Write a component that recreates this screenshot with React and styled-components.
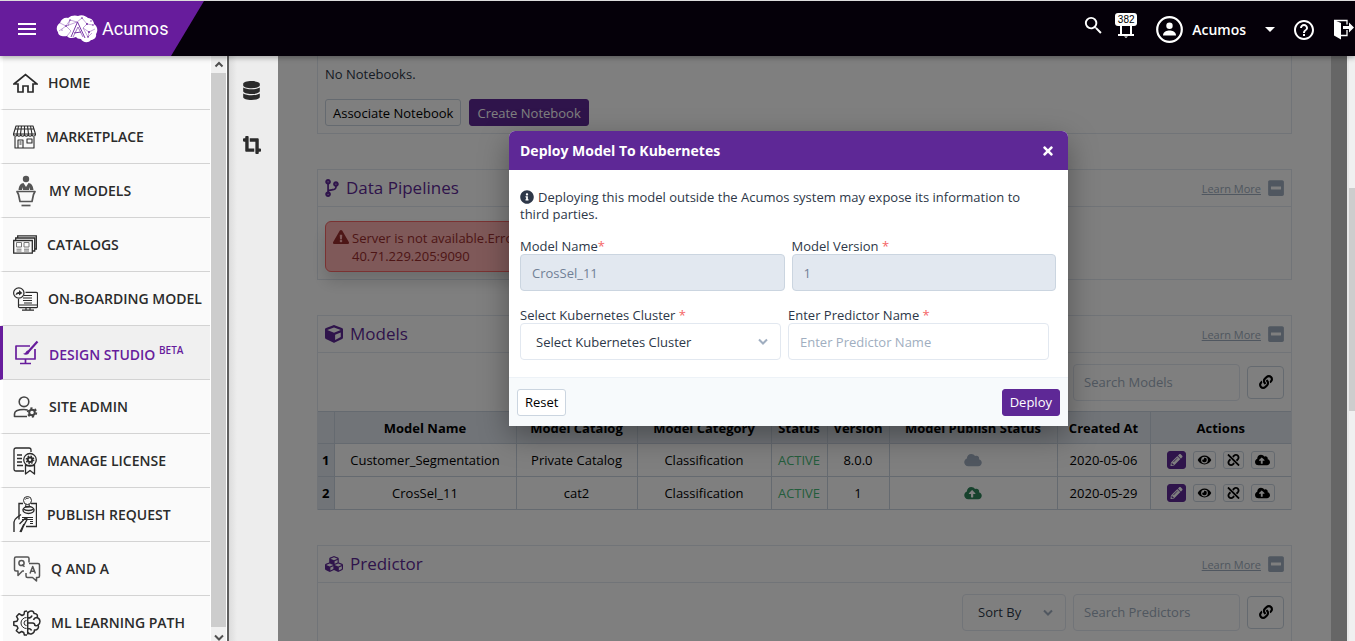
import React from "react";
import styled, { createGlobalStyle, css } from "styled-components";
import {
  FaCodeBranch, FaCloud, FaCloudUploadAlt, FaCropAlt, FaCube, FaCubes, FaDatabase,
  FaExclamationTriangle, FaEye, FaInfoCircle, FaLink, FaMinusSquare, FaPencilAlt, FaTimes, FaUnlink,
} from "react-icons/fa";
import { MdHelpOutline, MdMenu, MdSearch } from "react-icons/md";

const Global = createGlobalStyle`
  *, *::before, *::after { box-sizing: border-box; }
  body { margin: 0; background: #fff; font-family: "Open Sans", "Noto Sans", sans-serif; font-size: 13px; color: #2d3748; }
  button, input, select { font: inherit; color: inherit; margin: 0; }
  button { cursor: pointer; }
  svg { display: block; flex: none; }
`;

const Page = styled.div`
  display: flex;
  flex-direction: column;
  height: 100vh;
  overflow: hidden;
`;

/* ---------- top bar ---------- */
const TopBar = styled.header`
  position: relative;
  z-index: 5;
  flex: none;
  display: flex;
  justify-content: space-between;
  height: 56px;
  overflow: clip;
  overflow-clip-margin: 8px;
  background: #050009;
  border-top: 1px solid #dcdcdc;
  color: #fff;
  box-shadow: 0 2px 5px rgba(0, 0, 0, 0.3);
`;
const Brand = styled.div`
  display: flex;
  align-items: center;
  width: 204px;
  padding-left: 15px;
  background: #671c9c;
  clip-path: polygon(0 0, 100% 0, 171px 100%, 0 100%);
`;
const PlainButton = styled.button`
  display: flex;
  align-items: center;
  padding: 0;
  border: 0;
  background: none;
`;
const Logo = styled.a`
  display: flex;
  align-items: center;
  gap: 4px;
  margin-left: 17px;
  color: #fff;
  text-decoration: none;
  font-family: "Roboto", sans-serif;
  font-size: 18px;
  font-weight: 400;
  line-height: 28px;
`;
const TopActions = styled.div`
  display: flex;
  align-items: center;
  flex: none;
  padding-top: 2px;
`;
const AlertActions = styled.div`
  display: flex;
  align-items: center;
  gap: 10px;
  padding-bottom: 8px;
  margin-right: 19px;
`;
const BellButton = styled(PlainButton)`
  flex-direction: column;
`;
const Badge = styled.span`
  width: 22px;
  border-radius: 3px;
  background: #fff;
  color: #000;
  font: 10px/13px "Liberation Sans", sans-serif;
  text-align: center;
`;
const UserButton = styled(PlainButton)`
  gap: 9px;
  margin-right: 17px;
  font-size: 14px;
  font-weight: 600;
`;
const Caret = styled.span`
  margin-left: 10px;
  border: 5px solid transparent;
  border-top-color: #fff;
  border-bottom: 0;
`;
const LogoutButton = styled(PlainButton)`
  width: 22px;
  margin-left: 17px;
`;

/* ---------- side menu ---------- */
const Body = styled.div`
  display: flex;
  flex: 1;
  min-height: 0;
`;
const Side = styled.div`
  display: flex;
  flex: none;
  width: 229px;
  border-right: 2px solid #5f5f5f;
  overflow: hidden;
`;
const Menu = styled.nav`
  width: 211px;
  overflow: hidden;
  border-right: 1px solid #fff;
  background: #fafafa;
`;
const MenuItem = styled.a`
  display: flex;
  align-items: center;
  gap: 10px;
  height: 54px;
  padding-left: 10px;
  border-left: 3px solid ${(p) => (p.$active ? "#671c9c" : "#fff")};
  border-bottom: 1px solid #d3d3d3;
  background: ${(p) => (p.$active ? "#f0f0f0" : "#fafafa")};
  color: ${(p) => (p.$active ? "#671c9c" : "#2b2b2b")};
  font-size: 14px;
  font-weight: 600;
  white-space: nowrap;
  text-decoration: none;
  sup { font-size: 10px; line-height: 18px; }
`;
const Scroll = styled.div`
  display: flex;
  flex-direction: column;
  flex: none;
  width: ${(p) => p.$width || 15}px;
  background: #f0f0f0;
`;
const ScrollArrow = styled.div`
  display: flex;
  justify-content: center;
  align-items: ${(p) => (p.$end ? "flex-end" : "center")};
  height: ${(p) => (p.$end ? 14 : 17)}px;
`;
const ScrollThumb = styled.div`
  flex: 1;
  background: #cdcdcd;
`;

/* ---------- workspace ---------- */
const Workspace = styled.main`
  position: relative;
  display: flex;
  flex: 1;
  min-width: 0;
`;
const Rail = styled.div`
  z-index: 3;
  display: flex;
  flex-direction: column;
  align-items: center;
  gap: 36px;
  flex: none;
  width: 49px;
  padding: 25px 4px 0 0;
  background: linear-gradient(90deg, #dcdcdc, #ededed 8px);
  color: #2b2b2b;
`;
const Content = styled.div`
  display: flex;
  flex-direction: column;
  gap: 35px;
  flex: 1;
  min-width: 0;
  padding: 0 39px;
  overflow: hidden;
  background: #fff;
`;
const Panel = styled.section`
  flex: none;
  border: 1px solid #e2e8f0;
  border-top-width: ${(p) => (p.$open ? 0 : 1)}px;
`;
const PanelHead = styled.div`
  display: flex;
  align-items: center;
  gap: 7px;
  height: 37px;
  padding: 0 7px;
  border-bottom: 1px solid #e2e8f0;
  color: #5e2896;
  > svg { width: ${(p) => p.$iconWidth}px; height: 18px; }
  h2 { flex: 1; margin: 0; font-size: 17px; font-weight: 400; line-height: 24px; }
`;
const LearnMore = styled.a`
  color: #a0aec0;
  font-size: 11px;
`;
const ToggleButton = styled(PlainButton)`
  color: #a0aec0;
  svg { width: 16px; height: 18px; }
`;
const Notebooks = styled.div`
  padding: 8px 7px 7px;
  p { margin: 0 0 15px; line-height: 20px; }
`;
const ButtonRow = styled.div`
  display: flex;
  gap: 8px;
`;
const Button = styled.button`
  height: 27px;
  padding: 0 7px;
  border: 1px solid #cbd5e0;
  border-radius: 3px;
  background: #fff;
  color: #000;
  line-height: 20px;
  ${(p) => p.$primary && css`
    border-color: #5e2896;
    background: #5e2896;
    color: #fff;
  `}
`;
const AlertArea = styled.div`
  display: flex;
  padding: 14px 7px 7px;
`;
const Alert = styled.div`
  display: flex;
  gap: 3px;
  width: 380px;
  padding: 7px 7px 6px;
  border: 1px solid #f56565;
  border-radius: 6px;
  background: #feb2b2;
  color: #9b2c2c;
  line-height: 18px;
  box-shadow: 0 10px 15px rgba(0, 0, 0, 0.15);
`;
const Toolbar = styled.div`
  display: flex;
  justify-content: flex-end;
  align-items: center;
  gap: 7px;
  height: 58px;
  padding: 0 7px;
`;
const SearchInput = styled.input`
  width: 167px;
  height: 37px;
  padding: 0 10px;
  border: 1px solid #e2e8f0;
  border-radius: 4px;
  background: #fff;
  &::placeholder { color: #a0aec0; opacity: 1; }
`;
const LinkButton = styled.button`
  display: grid;
  place-items: center;
  width: 37px;
  height: 33px;
  padding: 0;
  border: 1px solid #cbd5e0;
  border-radius: 4px;
  background: #fff;
  color: #000;
  font-size: 14px;
`;
const SelectBox = styled.div`
  position: relative;
  width: ${(p) => (p.$width ? p.$width + "px" : "100%")};
  select {
    width: 100%;
    height: 37px;
    padding: 0 30px 0 15px;
    border: 1px solid #e2e8f0;
    border-radius: 4px;
    background: #fff;
    appearance: none;
  }
  svg { position: absolute; right: 13px; top: 15px; pointer-events: none; }
`;
const Table = styled.table`
  width: 100%;
  margin-bottom: -1px;
  table-layout: fixed;
  border-collapse: collapse;
  color: #000;
  text-align: center;
  th, td {
    height: 32px;
    padding: 0;
    border: 1px solid #cbd5e0;
    white-space: nowrap;
  }
  td { height: 33px; }
  th { background: #e2e8f0; font-weight: 700; }
  tr > :first-child { border-left: 0; }
  tr > :last-child { border-right: 0; }
`;
const Status = styled.span`
  color: #48bb78;
`;
const CenterIcon = styled.span`
  display: flex;
  justify-content: center;
  color: ${(p) => p.$color};
  svg { width: 18px; height: 14px; }
`;
const Actions = styled.div`
  display: flex;
  justify-content: center;
  gap: 7px;
`;
const ActionButton = styled.button`
  display: flex;
  justify-content: center;
  align-items: center;
  width: ${(p) => p.$width}px;
  height: 18px;
  padding: 0;
  border: 1px solid ${(p) => (p.$primary ? "#5e2896" : "#cbd5e0")};
  border-radius: 3px;
  background: ${(p) => (p.$primary ? "#5e2896" : "#fff")};
  color: ${(p) => (p.$primary ? "#fff" : "#000")};
  svg { width: 15px; height: 12px; }
`;
const WindowScroll = styled.div`
  flex: none;
  width: 8px;
  border-left: 2px solid #e8e8e8;
  background: #f0f0f0;
  padding-top: 132px;
`;
const WindowThumb = styled.div`
  height: 223px;
  background: #cdcdcd;
`;

/* ---------- dialog ---------- */
const Overlay = styled.div`
  position: absolute;
  inset: 0;
  z-index: 2;
  display: flex;
  justify-content: center;
  align-items: flex-start;
  padding: 75px 0 0 1px;
  background: rgba(0, 0, 0, 0.5);
`;
const Dialog = styled.div`
  width: 559px;
  max-width: 100%;
  border-radius: 6px 6px 0 0;
  background: #fff;
  box-shadow: 0 10px 30px rgba(0, 0, 0, 0.35);
`;
const DialogHead = styled.div`
  display: flex;
  justify-content: space-between;
  align-items: center;
  height: 39px;
  padding: 0 13px 0 11px;
  border-radius: 6px 6px 0 0;
  background: #5e2896;
  color: #fff;
  h1 { margin: 0; font-size: 14px; font-weight: 700; }
  button { font-size: 14px; }
`;
const DialogBody = styled.div`
  padding: 19px 12px 17px 11px;
`;
const Notice = styled.p`
  margin: 0 0 15px;
  padding-right: 18px;
  line-height: 17px;
  svg { display: inline-block; margin-right: 4px; font-size: 14px; vertical-align: -2px; }
`;
const FieldRow = styled.div`
  display: flex;
  gap: 7px;
  padding-right: ${(p) => (p.$inset ? 7 : 0)}px;
  & + & { margin-top: 16px; }
`;
const Field = styled.div`
  flex: 1;
  label { display: block; line-height: 16px; }
  em { color: #f56565; font-style: normal; }
`;
const TextInput = styled.input`
  display: block;
  width: 100%;
  height: 37px;
  padding: 0 11px;
  border: 1px solid #e2e8f0;
  border-radius: 4px;
  background: #fff;
  &::placeholder { color: #a0aec0; opacity: 1; }
  &:disabled { border-color: #cbd5e0; background: #e2e8f0; color: #718096; }
`;
const DialogFoot = styled.div`
  display: flex;
  justify-content: space-between;
  align-items: center;
  height: 49px;
  padding: 0 8px;
  border-top: 1px solid #edf2f7;
  background: #f7fafc;
`;

/* ---------- drawings ---------- */
const Line = ({ w, h, sw = 1.4, children }) => (
  <svg width={w} height={h} viewBox={`0 0 ${w} ${h}`} fill="none" stroke="currentColor" strokeWidth={sw} strokeLinejoin="round" aria-hidden="true">
    {children}
  </svg>
);
const BrainLogo = () => (
  <svg width="42" height="28" viewBox="0 0 42 28" aria-hidden="true">
    <path fill="#fff" d="M2 17C-1 13 2 9 4 8 5 4 9 2 12 3c3-3 8-3 10-2 4-2 8 0 10 2 4 0 6 4 6 6 4 3 4 7 2 10 1 4-3 6-5 6-3 4-9 2-10-1-3 0-4-1-5-2-4 2-8 1-9-1-4 1-9 0-9-4z" />
    <g stroke="#671c9c" strokeWidth=".4" fill="none">
      <path d="M4 8l6 3 4-6 7 2 5-4 5 6 6 1M3 16l7-5 5 5-4 5M10 11l11-4M31 9l-4 4 6 4 6-3M27 13l5 9 1-5M32 22l4-4M14 5l-2 6" />
      <path strokeWidth=".9" d="M15 22l6.500-15 7.500 16M18 18l7-1" />
      <path strokeWidth=".6" d="M17 22l5-10 5 10" />
    </g>
    <g fill="#671c9c">
      <circle cx="10" cy="11" r=".8" /><circle cx="14" cy="5" r=".7" /><circle cx="26" cy="3" r=".8" /><circle cx="31" cy="9" r=".9" />
      <circle cx="37" cy="10" r=".8" /><circle cx="33" cy="17" r=".9" /><circle cx="32" cy="22" r=".8" /><circle cx="6" cy="15" r=".6" /><circle cx="35" cy="6" r=".7" />
    </g>
  </svg>
);
const UserIcon = () => (
  <svg width="27" height="27" viewBox="0 0 27 27" aria-hidden="true">
    <circle cx="13.500" cy="13.500" r="12.300" fill="none" stroke="#fff" strokeWidth="2.200" />
    <circle cx="13.500" cy="9.800" r="3.200" fill="#fff" />
    <path fill="#fff" d="M7 19.500c0-4 4-5 6.500-5s6.500 1 6.500 5z" />
  </svg>
);
const BellBase = () => (
  <svg width="18" height="12" viewBox="0 0 18 12" aria-hidden="true">
    <path d="M4 0v9M14 0v9M1 9h16" stroke="#fff" strokeWidth="2" fill="none" />
    <path d="M7 10.500h4l-2 1.500z" fill="#fff" />
  </svg>
);
const LogoutIcon = () => (
  <svg width="23" height="21" viewBox="0 0 23 21" aria-hidden="true">
    <path fill="#fff" d="M1 1l7 3v16.500l-7-4z" />
    <path fill="none" stroke="#fff" strokeWidth="1.300" d="M1 1.500h13v4M14 11v5.500H8" />
    <path fill="#fff" d="M10 7h6V3.500l5 5-5 5V10h-6z" />
  </svg>
);
const HomeIcon = () => (
  <Line w={25} h={20} sw={1.7}><path strokeLinejoin="miter" d="M1 11L12.500 1.500 24 11h-4v8h-5v-6h-5v6H5v-8z" /></Line>
);
const MarketIcon = () => (
  <Line w={23} h={24} sw={1.1}>
    <path d="M3 1h17l2.500 8H.5zM2 12v11h19V12M5 23v-8h5v8M14 14h5v4h-5zM5.500 1L4 9M8.500 1L7.500 9M11.500 1v8M14.500 1l1 8M17.500 1L19 9M2 4h19" />
    <path d="M.5 9c0 3 3.600 3 3.600 0 0 3 3.700 3 3.700 0 0 3 3.700 3 3.700 0 0 3 3.700 3 3.700 0 0 3 3.700 3 3.700 0 0 3 3.600 3 3.600 0" />
    <path d="M6.500 17h2M6.500 19h2" />
  </Line>
);
const ModelsIcon = () => (
  <Line w={26} h={32} sw={1.7}>
    <g color="#555" stroke="currentColor">
      <circle cx="13" cy="4" r="3.200" fill="currentColor" stroke="none" />
      <path fill="currentColor" stroke="none" d="M5.500 15c.5-5 2.500-6.500 5-7L13 12l2.500-4c2.500.5 4.500 2 5 7h-3.500l-1-3v3h-6v-3l-1 3z" />
      <path d="M4 16.500h18l-1.500 3-1.500 7H7l-1.500-7z" />
      <path d="M8.500 30.500h9" />
    </g>
  </Line>
);
const CatalogIcon = () => (
  <Line w={24} h={19} sw={1.3}>
    <path strokeLinejoin="miter" d="M.7 5.500h18.600v12.700H.7zM2.700 5.500V3h19v13h-2.400M4.700 3V.8h18.600V14h-1.600" />
    <path strokeWidth="1" stroke="#777" d="M3.500 7.500h5v4.500h-5zM11 7.500h5v4.500h-5zM3.500 14.200h5M3.500 16h5M11 14.200h5M11 16h5" />
  </Line>
);
const OnboardIcon = () => (
  <Line w={25} h={24} sw={1.2}>
    <circle cx="5.800" cy="6" r="5.200" />
    <path fill="currentColor" stroke="none" d="M2.500 8.500c.3-2.500 1.500-3.500 3.500-3.500V3l3.300 3L6 8.500V7C4.500 7 3.500 7.500 2.500 8.500z" />
    <path d="M5.500 12v7.500c0 .8.500 1.200 1.200 1.200h16.600c.7 0 1.200-.5 1.200-1.200v-13c0-.7-.5-1.200-1.200-1.200H12.500M5.500 18h19M13 21v2M17 21v2M9 23.200h12" />
    <path d="M11 8.500h8M10 11h9M10 13.500h9M11 16h8" />
  </Line>
);
const DesignIcon = () => (
  <Line w={26} h={25} sw={1.7}>
    <path d="M17 6H3v13h19V9M12.500 19v4M7 23.500h11" />
    <path strokeWidth="2.200" d="M24.500 1.500L15.500 11.500" />
    <path fill="currentColor" stroke="none" d="M16.500 11.500c-.5-1.500-2.500-1.500-3.300 0-.7 1.500-1.500 2-3.200 2.200 2.500 2 6.200 1 6.500-2.200z" />
  </Line>
);
const AdminIcon = () => (
  <Line w={26} h={22} sw={1.6}>
    <g stroke="#444">
      <circle cx="11" cy="5.800" r="4.800" />
      <path d="M14 20.500H1.500v-2.500c0-3 4-4.500 9.500-4.500 1.500 0 2.500.2 3.500.5" />
      <circle cx="19" cy="16.500" r="2.800" strokeWidth="2" />
      <circle cx="19" cy="16.500" r="4.300" strokeWidth="1.800" strokeDasharray="2.200 2.300" />
    </g>
  </Line>
);
const LicenseIcon = () => (
  <Line w={24} h={28} sw={1.3}>
    <path d="M11 24H3c-1.300 0-2-.8-2-2V3c0-1.300.8-2 2-2h13c1.300 0 2 .7 2 2v2M4 8h5M4 11.500h5M4 15h5M4 18.500h6" />
    <circle cx="17" cy="12.800" r="6.300" />
    <circle cx="17" cy="12.800" r="2.300" strokeWidth="2" /><circle cx="17" cy="12.800" r="3.800" strokeWidth="1.200" strokeDasharray="1.500 1.500" />
    <path d="M12.500 17.500V27l4.500-3.500 4.500 3.500v-9.500M12 18.500h10" />
  </Line>
);
const PublishIcon = () => (
  <Line w={24} h={37} sw={1.4}>
    <path strokeLinejoin="miter" d="M10 7.500H6v16M18 7.500h5.500v23H13" />
    <circle cx="14.500" cy="4.500" r="4" strokeWidth="1" />
    <path strokeWidth="1" d="M13 8l-.5 3h4l-.5-3M12.500 3.500a2 2 0 0 1 3-1M9 21.500h11M9 23.500h11M17 25.500h3M17 27.500h3" />
    <ellipse cx="15.500" cy="14" rx="5.500" ry="3.500" /><path d="M11 13c1 2 8 2 9 0" />
    <path d="M1 36V26c0-2 1-3 3-4.500l4-3M7 36l4-8" />
    <path d="M6.500 28L12 22.500c1-1 2.800 0 1.800 1.500L10 31l-2 5" />
  </Line>
);
const QaIcon = () => (
  <Line w={28} h={26} sw={1.5}>
    <g stroke="#555">
      <path d="M16 6.500V2.500c0-1-.6-1.500-1.500-1.500H3c-1 0-1.500.6-1.500 1.500v11c0 1 .6 1.500 1.500 1.500h2v4.500L9.500 15H11" />
      <path d="M16 7.500h9c1 0 1.500.5 1.500 1.500V20c0 1-.5 1.500-1.500 1.500h-1.500v3.500l-4-3.500h-5c-1 0-1.500-.5-1.500-1.500v-3" />
      <circle cx="8.500" cy="7" r="2.600" /><path d="M9 8.500l2.500 2.200M17 17.500l2.700-7 2.700 7M18 15.200h3.600" />
    </g>
  </Line>
);
const LearningIcon = () => (
  <Line w={28} h={26} sw={1.5}>
    <path d="M14 1l-2.500.5-.5 3-2 1-3-1.800L3.500 6.500l1.500 2.700-1 2-3.200.5v3.600l3.200.7 1 2.200-1.700 2.500L6 23l2.700-1.500 2 1 .7 2.500H14" />
    <path d="M13.500 7.500a5.500 5.500 0 0 0 0 11M13.500 10.500a2.500 2.500 0 0 0 0 5" strokeWidth="1" />
    <path d="M14.700 1.500v23M15 3c1-3 6-2.500 6 .5 3-.3 4 2 3 4 4 1.500 3.500 6 1 7.500 1.500 3-1 5.500-3.500 5 0 4-5 5-6.500 2.500M15 8c2 0 3.500-.5 4-2.500M24 7.500c-2 0-3 1-3.500 2.500M15 13h4.500c2 0 2.500 2 2.500 3M25 15c-1.500 1-3 .5-3.500 0M15 18.500c2 0 3 .5 3.500 2" />
  </Line>
);
const Chevron = ({ up, color = "#505050" }) => (
  <svg width="10" height="7" viewBox="0 0 10 7" fill="none" stroke={color} strokeWidth="2" aria-hidden="true">
    <path d={up ? "M1.500 5.500L5 2l3.500 3.500" : "M1 1.500l4 4 4-4"} />
  </svg>
);

const menu = [
  ["HOME", HomeIcon], ["MARKETPLACE", MarketIcon], ["MY MODELS", ModelsIcon], ["CATALOGS", CatalogIcon],
  ["ON-BOARDING MODEL", OnboardIcon], ["DESIGN STUDIO", DesignIcon], ["SITE ADMIN", AdminIcon],
  ["MANAGE LICENSE", LicenseIcon], ["PUBLISH REQUEST", PublishIcon], ["Q AND A", QaIcon], ["ML LEARNING PATH", LearningIcon],
];
const columns = [
  ["", 16], ["Model Name", 182], ["Model Catalog", 121], ["Model Category", 134], ["Status", 56],
  ["Version", 62], ["Model Publish Status", 168], ["Created At", 93], ["Actions", 141],
];
const models = [
  { name: "Customer_Segmentation", catalog: "Private Catalog", version: "8.0.0", published: false, created: "2020-05-06" },
  { name: "CrosSel_11", catalog: "cat2", version: "1", published: true, created: "2020-05-29" },
];

const PanelTitle = ({ icon, iconWidth = 18, title }) => (
  <PanelHead $iconWidth={iconWidth}>
    {icon}
    <h2>{title}</h2>
    <LearnMore href="#learn">Learn More</LearnMore>
    <ToggleButton aria-label={`Collapse ${title}`}><FaMinusSquare /></ToggleButton>
  </PanelHead>
);

export default function App() {
  return (
    <Page>
      <Global />
      <TopBar>
        <Brand>
          <PlainButton aria-label="Menu"><MdMenu size={24} color="#fff" /></PlainButton>
          <Logo href="#home"><BrainLogo />Acumos</Logo>
        </Brand>
        <TopActions>
          <AlertActions>
            <PlainButton aria-label="Search"><MdSearch size={23} color="#fff" /></PlainButton>
            <BellButton aria-label="Notifications"><Badge>382</Badge><BellBase /></BellButton>
          </AlertActions>
          <UserButton><UserIcon />Acumos<Caret /></UserButton>
          <PlainButton aria-label="Help"><MdHelpOutline size={24} color="#fff" /></PlainButton>
          <LogoutButton aria-label="Log out"><LogoutIcon /></LogoutButton>
        </TopActions>
      </TopBar>

      <Body>
        <Side>
          <Menu>
            {menu.map(([label, Icon]) => (
              <MenuItem key={label} href="#" $active={label === "DESIGN STUDIO"}>
                <Icon />
                <span>{label}{label === "DESIGN STUDIO" && <> <sup>BETA</sup></>}</span>
              </MenuItem>
            ))}
          </Menu>
          <Scroll>
            <ScrollArrow><Chevron up /></ScrollArrow>
            <ScrollThumb />
            <ScrollArrow $end><Chevron /></ScrollArrow>
          </Scroll>
        </Side>

        <Workspace>
          <Rail>
            <FaDatabase size={19} />
            <FaCropAlt size={18} />
          </Rail>
          <Content>
            <Panel $open>
              <Notebooks>
                <p>No Notebooks.</p>
                <ButtonRow>
                  <Button>Associate Notebook</Button>
                  <Button $primary>Create Notebook</Button>
                </ButtonRow>
              </Notebooks>
            </Panel>

            <Panel>
              <PanelTitle icon={<FaCodeBranch />} iconWidth={14} title="Data Pipelines" />
              <AlertArea>
                <Alert role="alert">
                  <FaExclamationTriangle size={16} />
                  <span>Server is not available.Error<br />40.71.229.205:9090</span>
                </Alert>
              </AlertArea>
            </Panel>

            <Panel>
              <PanelTitle icon={<FaCube />} title="Models" />
              <Toolbar>
                <SearchInput placeholder="Search Models" aria-label="Search Models" />
                <LinkButton aria-label="Associate model"><FaLink /></LinkButton>
              </Toolbar>
              <Table>
                <colgroup>{columns.map(([label, width]) => <col key={label} width={width} />)}</colgroup>
                <thead>
                  <tr>{columns.map(([label]) => <th key={label} scope="col">{label}</th>)}</tr>
                </thead>
                <tbody>
                  {models.map((m, i) => (
                    <tr key={m.name}>
                      <th scope="row">{i + 1}</th>
                      <td>{m.name}</td>
                      <td>{m.catalog}</td>
                      <td>Classification</td>
                      <td><Status>ACTIVE</Status></td>
                      <td>{m.version}</td>
                      <td>
                        <CenterIcon $color={m.published ? "#2f855a" : "#a0aec0"}>
                          {m.published ? <FaCloudUploadAlt /> : <FaCloud />}
                        </CenterIcon>
                      </td>
                      <td>{m.created}</td>
                      <td>
                        <Actions>
                          <ActionButton $primary $width={19} aria-label="Edit"><FaPencilAlt /></ActionButton>
                          <ActionButton $width={23} aria-label="View"><FaEye /></ActionButton>
                          <ActionButton $width={21} aria-label="Unlink"><FaUnlink /></ActionButton>
                          <ActionButton $width={24} aria-label="Deploy"><FaCloudUploadAlt /></ActionButton>
                        </Actions>
                      </td>
                    </tr>
                  ))}
                </tbody>
              </Table>
            </Panel>

            <Panel>
              <PanelTitle icon={<FaCubes />} title="Predictor" />
              <Toolbar>
                <SelectBox $width={104}>
                  <select aria-label="Sort predictors"><option>Sort By</option></select>
                  <Chevron color="#a0aec0" />
                </SelectBox>
                <SearchInput placeholder="Search Predictors" aria-label="Search Predictors" />
                <LinkButton aria-label="Associate predictor"><FaLink /></LinkButton>
              </Toolbar>
            </Panel>
          </Content>
          <Scroll $width={16}><ScrollThumb /></Scroll>

          <Overlay>
            <Dialog role="dialog" aria-modal="true" aria-labelledby="deploy-title">
              <DialogHead>
                <h1 id="deploy-title">Deploy Model To Kubernetes</h1>
                <PlainButton aria-label="Close"><FaTimes color="#fff" /></PlainButton>
              </DialogHead>
              <DialogBody>
                <Notice>
                  <FaInfoCircle />
                  Deploying this model outside the Acumos system may expose its information to third parties.
                </Notice>
                <FieldRow>
                  <Field>
                    <label htmlFor="model-name">Model Name<em>*</em></label>
                    <TextInput id="model-name" defaultValue="CrosSel_11" disabled />
                  </Field>
                  <Field>
                    <label htmlFor="model-version">Model Version <em>*</em></label>
                    <TextInput id="model-version" defaultValue="1" disabled />
                  </Field>
                </FieldRow>
                <FieldRow $inset>
                  <Field>
                    <label htmlFor="cluster">Select Kubernetes Cluster <em>*</em></label>
                    <SelectBox>
                      <select id="cluster"><option>Select Kubernetes Cluster</option></select>
                      <Chevron color="#a0aec0" />
                    </SelectBox>
                  </Field>
                  <Field>
                    <label htmlFor="predictor">Enter Predictor Name <em>*</em></label>
                    <TextInput id="predictor" placeholder="Enter Predictor Name" />
                  </Field>
                </FieldRow>
              </DialogBody>
              <DialogFoot>
                <Button>Reset</Button>
                <Button $primary>Deploy</Button>
              </DialogFoot>
            </Dialog>
          </Overlay>
        </Workspace>
        <WindowScroll><WindowThumb /></WindowScroll>
      </Body>
    </Page>
  );
}
